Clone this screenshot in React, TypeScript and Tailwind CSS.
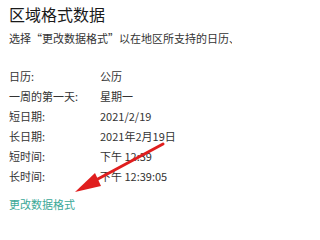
const ROWS: [string, string][] = [
  ["日历:", "公历"],
  ["一周的第一天:", "星期一"],
  ["短日期:", "2021/2/19"],
  ["长日期:", "2021年2月19日"],
  ["短时间:", "下午 12:39"],
  ["长时间:", "下午 12:39:05"],
];

export default function App() {
  return (
    <div
      className="relative h-[226px] w-[232px] overflow-hidden bg-white pl-[9px] text-[#333]"
      style={{ fontFamily: '"Noto Sans CJK SC", "Noto Sans", sans-serif' }}
    >
      <h1 className="mt-[4px] text-[16px] leading-[20px] text-[#1a1a1a]">区域格式数据</h1>
      <p className="mt-[6px] whitespace-nowrap text-[11px] leading-[16px]">
        选择“更改数据格式”以在地区所支持的日历、时间和日期格式之间切换
      </p>

      <div className="mt-[20px] flex flex-col">
        {ROWS.map(([label, value]) => (
          <div key={label} className="flex h-[20px] items-center text-[11px] leading-[20px]">
            <span className="w-[91px] shrink-0">{label}</span>
            <span>{value}</span>
          </div>
        ))}
      </div>

      <a className="mt-[10px] block text-[11px] leading-[16px] text-[#3aa897]">更改数据格式</a>

      {/* red annotation arrow */}
      <svg className="pointer-events-none absolute inset-0" width="232" height="226" viewBox="0 0 232 226">
        <line x1="163" y1="144" x2="96" y2="180" stroke="#e01e1e" strokeWidth="3" strokeLinecap="round" />
        <polygon points="75,192 101,186 95,173" fill="#e01e1e" />
      </svg>
    </div>
  );
}
